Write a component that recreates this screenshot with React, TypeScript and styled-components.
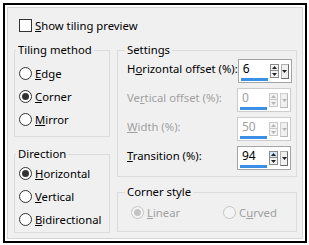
import React from 'react';
import styled, { createGlobalStyle } from 'styled-components';

const Global = createGlobalStyle`
  html, body { margin: 0; padding: 0; background: #fff; }
  body { font-family: "Noto Sans", "Open Sans", sans-serif; font-size: 11.3px; color: #000; }
  * { box-sizing: border-box; }
`;

const Frame = styled.div`
  margin: 3px;
  width: 304px;
  height: 240px;
  border: 2px solid #000;
  padding: 2px;
  background: #fff;
`;

const Panel = styled.div`
  width: 100%;
  height: 100%;
  border: 1px solid #d5d5d5;
  background: #f0f0f0;
  padding: 11px 5px 0 6px;
`;

const CheckRow = styled.label`
  display: flex;
  align-items: center;
  gap: 3px;
  height: 13px;
  margin-left: 5px;
  line-height: 13px;
`;

const CheckBox = styled.span`
  width: 13px;
  height: 13px;
  border: 1px solid #333;
  background: #fff;
  flex: none;
`;

const Columns = styled.div`
  display: grid;
  grid-template-columns: 96px 180px;
  column-gap: 7px;
  margin-top: 10px;
`;

const Column = styled.div<{ $gap: number }>`
  display: flex;
  flex-direction: column;
  gap: ${p => p.$gap}px;
`;

const Group = styled.fieldset<{ $padTop: number; $padBottom: number }>`
  margin: 0;
  border: 1px solid #dcdcdc;
  padding: ${p => `${p.$padTop}px 0 ${p.$padBottom}px 0`};
  min-width: 0;
`;

const Legend = styled.legend<{ $offset: number }>`
  margin-left: ${p => p.$offset}px;
  padding: 0 2px;
  line-height: 16px;
  font-size: 11.3px;
`;

const GroupBody = styled.div<{ $padLeft: number }>`
  padding-left: ${p => p.$padLeft}px;
`;

const RadioRow = styled.label<{ $disabled?: boolean }>`
  display: flex;
  align-items: center;
  gap: 3px;
  height: 23px;
  color: ${p => (p.$disabled ? '#a0a0a0' : '#000')};
`;

const RadioCircle = styled.span<{ $checked?: boolean; $disabled?: boolean }>`
  width: 13px;
  height: 13px;
  border-radius: 50%;
  border: 1px solid ${p => (p.$disabled ? '#c4c4c4' : '#333')};
  background: ${p => (p.$disabled ? '#f4f4f4' : '#fff')};
  display: flex;
  align-items: center;
  justify-content: center;
  flex: none;
  &::after {
    content: '';
    width: 7px;
    height: 7px;
    border-radius: 50%;
    background: ${p => (p.$disabled ? '#c4c4c4' : '#333')};
    display: ${p => (p.$checked ? 'block' : 'none')};
  }
`;

const CornerRow = styled.div`
  display: grid;
  grid-template-columns: 92px 1fr;
`;

const SettingRow = styled.div<{ $disabled?: boolean }>`
  display: grid;
  grid-template-columns: 1fr 54px;
  height: 29px;
  padding: 0 5px 0 9px;
  color: ${p => (p.$disabled ? '#a0a0a0' : '#000')};
`;

const SettingLabel = styled.span`
  line-height: 20px;
  white-space: nowrap;
`;

const SpinBox = styled.div<{ $disabled?: boolean }>`
  display: flex;
  align-items: center;
  height: 24px;
  border: 1px solid ${p => (p.$disabled ? '#cccccc' : '#a5a5a5')};
  background: #fff;
  padding: 0 2px 0 1px;
`;

const ValueArea = styled.div`
  width: 30px;
  height: 100%;
  display: flex;
  flex-direction: column;
  justify-content: flex-end;
  padding-bottom: 1px;
`;

const ValueText = styled.span`
  padding-left: 3px;
  line-height: 16px;
  font-size: 12px;
`;

const Bar = styled.span`
  display: block;
  margin: 1px 1px 0;
  height: 3px;
  background: #3b8fe4;
`;

const Arrows = styled.div<{ $disabled?: boolean; $hot?: boolean }>`
  width: 9px;
  height: 14px;
  margin-left: 1px;
  border: 1px solid ${p => (p.$disabled ? '#c8c8c8' : '#8a8a8a')};
  display: grid;
  grid-template-rows: 1fr 1fr;
  background: #f3f3f3;
  & > span:first-child {
    background: ${p => (p.$hot ? '#cfe6fb' : 'transparent')};
    border-bottom: 1px solid ${p => (p.$disabled ? '#c8c8c8' : '#8a8a8a')};
  }
`;

const ArrowCell = styled.span`
  display: flex;
  align-items: center;
  justify-content: center;
`;

const DropButton = styled.div<{ $disabled?: boolean }>`
  width: 8px;
  height: 15px;
  margin-left: 2px;
  border: 1px solid ${p => (p.$disabled ? '#d0d0d0' : '#b0b0b0')};
  border-right-color: ${p => (p.$disabled ? '#b8b8b8' : '#6a6a6a')};
  border-bottom-color: ${p => (p.$disabled ? '#b8b8b8' : '#6a6a6a')};
  background: #f0f0f0;
  display: flex;
  align-items: center;
  justify-content: center;
`;

const Tri = ({ up, color }: { up?: boolean; color: string }) => (
  <svg width="5" height="3" viewBox="0 0 5 3">
    <polygon points={up ? '0,3 5,3 2.5,0' : '0,0 5,0 2.5,3'} fill={color} />
  </svg>
);

type Setting = { label: React.ReactNode; value: string; disabled?: boolean; hot?: boolean };

const Spin = ({ value, disabled, hot }: { value: string; disabled?: boolean; hot?: boolean }) => {
  const c = disabled ? '#b5b5b5' : '#222';
  return (
    <SpinBox $disabled={disabled}>
      <ValueArea>
        <ValueText>{value}</ValueText>
        <Bar />
      </ValueArea>
      <Arrows $disabled={disabled} $hot={hot}>
        <ArrowCell><Tri up color={c} /></ArrowCell>
        <ArrowCell><Tri color={c} /></ArrowCell>
      </Arrows>
      <DropButton $disabled={disabled}>
        <Tri color={c} />
      </DropButton>
    </SpinBox>
  );
};

const Radio = ({ label, checked, disabled }: { label: React.ReactNode; checked?: boolean; disabled?: boolean }) => (
  <RadioRow $disabled={disabled}>
    <RadioCircle $checked={checked} $disabled={disabled} />
    <span>{label}</span>
  </RadioRow>
);

export default function App() {
  const settings: Setting[] = [
    { label: <>H<u>o</u>rizontal offset (%):</>, value: '6' },
    { label: <>Ve<u>r</u>tical offset (%):</>, value: '0', disabled: true },
    { label: <><u>W</u>idth (%):</>, value: '50', disabled: true },
    { label: <><u>T</u>ransition (%):</>, value: '94', hot: true },
  ];
  return (
    <>
      <Global />
      <Frame>
        <Panel>
          <CheckRow>
            <CheckBox />
            <span><u>S</u>how tiling preview</span>
          </CheckRow>
          <Columns>
            <Column $gap={9}>
              <Group $padTop={4} $padBottom={5}>
                <Legend $offset={1}>Tiling method</Legend>
                <GroupBody $padLeft={4}>
                  <Radio label={<><u>E</u>dge</>} />
                  <Radio label={<><u>C</u>orner</>} checked />
                  <Radio label={<><u>M</u>irror</>} />
                </GroupBody>
              </Group>
              <Group $padTop={0} $padBottom={1}>
                <Legend $offset={1}>Direction</Legend>
                <GroupBody $padLeft={4}>
                  <Radio label={<><u>H</u>orizontal</>} checked />
                  <Radio label={<><u>V</u>ertical</>} />
                  <Radio label={<><u>B</u>idirectional</>} />
                </GroupBody>
              </Group>
            </Column>
            <Column $gap={7}>
              <Group $padTop={1} $padBottom={1}>
                <Legend $offset={7}>Settings</Legend>
                {settings.map((s, i) => (
                  <SettingRow key={i} $disabled={s.disabled}>
                    <SettingLabel>{s.label}</SettingLabel>
                    <Spin value={s.value} disabled={s.disabled} hot={s.hot} />
                  </SettingRow>
                ))}
              </Group>
              <Group $padTop={1} $padBottom={7}>
                <Legend $offset={7}>Corner style</Legend>
                <GroupBody $padLeft={13}>
                  <CornerRow>
                    <Radio label={<><u>L</u>inear</>} checked disabled />
                    <Radio label={<>C<u>u</u>rved</>} disabled />
                  </CornerRow>
                </GroupBody>
              </Group>
            </Column>
          </Columns>
        </Panel>
      </Frame>
    </>
  );
}
